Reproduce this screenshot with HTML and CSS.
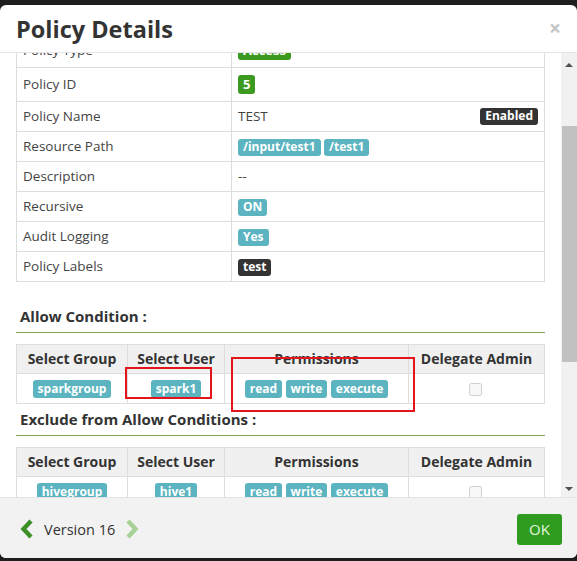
FILE: index.html
```html
<!DOCTYPE html>
<html lang="en">
<head>
  <meta charset="UTF-8">
  <title>Policy Details</title>
  <link rel="stylesheet" href="styles.css">
</head>
<body>
  <div class="modal">
    <div class="modal-header">
      <h3>Policy Details</h3>
      <button class="close">&times;</button>
    </div>

    <div class="modal-body">
      <div class="scroll-view" id="scroll-view">
        <div class="content">
          <h4 class="section-title">Policy Details :</h4>
          <table class="details-table">
            <tr class="tall" id="first-row">
              <td>Policy Type</td>
              <td><span class="label label-lg success">Access</span></td>
            </tr>
            <tr class="tall">
              <td>Policy ID</td>
              <td><span class="label label-lg success">5</span></td>
            </tr>
            <tr>
              <td>Policy Name</td>
              <td>TEST <span class="label dark pull-right">Enabled</span></td>
            </tr>
            <tr>
              <td>Resource Path</td>
              <td><span class="label info">/input/test1</span> <span class="label info">/test1</span></td>
            </tr>
            <tr>
              <td>Description</td>
              <td>--</td>
            </tr>
            <tr>
              <td>Recursive</td>
              <td><span class="label info">ON</span></td>
            </tr>
            <tr>
              <td>Audit Logging</td>
              <td><span class="label info">Yes</span></td>
            </tr>
            <tr>
              <td>Policy Labels</td>
              <td><span class="label dark">test</span></td>
            </tr>
          </table>

          <h4 class="section-title">Allow Condition :</h4>
          <table class="perm-table">
            <tr>
              <th class="c-group">Select Group</th>
              <th class="c-user">Select User</th>
              <th class="c-perm">Permissions</th>
              <th>Delegate Admin</th>
            </tr>
            <tr>
              <td><span class="label info">sparkgroup</span></td>
              <td><span class="label info">spark1</span></td>
              <td><span class="label info">read</span> <span class="label info">write</span> <span class="label info">execute</span></td>
              <td><input type="checkbox" disabled></td>
            </tr>
          </table>

          <h4 class="section-title">Exclude from Allow Conditions :</h4>
          <table class="perm-table">
            <tr>
              <th class="c-group">Select Group</th>
              <th class="c-user">Select User</th>
              <th class="c-perm">Permissions</th>
              <th>Delegate Admin</th>
            </tr>
            <tr>
              <td><span class="label info">hivegroup</span></td>
              <td><span class="label info">hive1</span></td>
              <td><span class="label info">read</span> <span class="label info">write</span> <span class="label info">execute</span></td>
              <td><input type="checkbox" disabled></td>
            </tr>
          </table>

          <h4 class="section-title">Deny Condition :</h4>
          <table class="perm-table">
            <tr>
              <th class="c-group">Select Group</th>
              <th class="c-user">Select User</th>
              <th class="c-perm">Permissions</th>
              <th>Delegate Admin</th>
            </tr>
            <tr>
              <td>--</td>
              <td>--</td>
              <td>--</td>
              <td>--</td>
            </tr>
          </table>
        </div>
      </div>

      <div class="scrollbar">
        <div class="sb-btn up"></div>
        <div class="sb-track"><div class="sb-thumb"></div></div>
        <div class="sb-btn down"></div>
      </div>
    </div>

    <div class="modal-footer">
      <div class="version">
        <svg class="chevron" width="14" height="20" viewBox="0 0 14 20">
          <path d="M11 2 L3.5 10 L11 18" fill="none" stroke="#3d8f27" stroke-width="4.4"/>
        </svg>
        <span>Version 16</span>
        <svg class="chevron" width="14" height="20" viewBox="0 0 14 20">
          <path d="M3 2 L10.5 10 L3 18" fill="none" stroke="#a6d197" stroke-width="4.4"/>
        </svg>
      </div>
      <button class="btn-ok">OK</button>
    </div>

    <!-- annotation boxes drawn over the screenshot -->
    <div class="mark mark-user"></div>
    <div class="mark mark-perm"></div>
  </div>

  <script>
    // body was scrolled a little past the first row
    const view = document.getElementById('scroll-view');
    const row = document.getElementById('first-row');
    view.scrollTop = row.getBoundingClientRect().bottom - view.getBoundingClientRect().top - 15;
  </script>
</body>
</html>
```

FILE: styles.css
```css
body {
  margin: 0;
  padding-top: 5px;
  height: 556px;
  overflow: hidden;
  background: #1e1e1e;
  font-family: "Open Sans", "Liberation Sans", sans-serif;
  color: #333;
}
.modal {
  position: relative;
  width: 577px;
  height: 553px;
  background: #fff;
  border-radius: 6px;
  display: flex;
  flex-direction: column;
  overflow: hidden;
}
.modal-header {
  height: 47px;
  flex: none;
  padding: 0 16px;
  display: flex;
  align-items: center;
  justify-content: space-between;
  border-bottom: 1px solid #e5e5e5;
}
.modal-header h3 {
  margin: 0;
  padding-top: 1px;
  font-size: 23.5px;
  font-weight: 700;
  color: #333;
}
.close {
  border: none;
  background: none;
  padding: 0;
  font-family: "Open Sans", sans-serif;
  font-size: 21px;
  font-weight: 700;
  line-height: 1;
  color: #c6c6c6;
}

.modal-body {
  flex: 1;
  min-height: 0;
  display: flex;
}
.scroll-view {
  flex: 1;
  overflow: hidden;
}
.content { padding: 15px 16px 40px; }

.scrollbar {
  width: 16px;
  flex: none;
  background: #f1f1f1;
  display: flex;
  flex-direction: column;
}
.sb-btn {
  height: 17px;
  display: flex;
  align-items: center;
  justify-content: center;
}
.sb-btn.up { padding-top: 3px; }
.sb-btn::before {
  content: "";
  border-left: 4px solid transparent;
  border-right: 4px solid transparent;
}
.sb-btn.up::before { border-bottom: 4px solid #505050; }
.sb-btn.down::before { border-top: 4px solid #505050; }
.sb-track { flex: 1; }
.sb-thumb {
  margin: 53px 0 0 1px;
  height: 236px;
  background: #c1c1c1;
}

/* labels */
.label {
  display: inline-block;
  padding: 1px 5px 2px;
  font-size: 12px;
  font-weight: 700;
  line-height: 14px;
  color: #fff;
  border-radius: 3px;
  vertical-align: baseline;
}
.label-lg {
  font-size: 13px;
  line-height: 17px;
  padding: 1px 5px;
}
.success { background: #3b9a1f; }
.info { background: #5bb4c0; }
.dark { background: #333; }
.pull-right { float: right; margin-top: 1px; }

/* detail table */
.details-table {
  width: 100%;
  border-collapse: collapse;
  margin-bottom: 21px;
}
.details-table td {
  border: 1px solid #ddd;
  padding: 5px 6px;
  font-size: 13.5px;
  line-height: 19px;
  color: #444;
}
.details-table td:first-child { width: 202px; }
.details-table .tall td { padding: 7px 6px; }

.section-title {
  margin: 2px 0 0;
  padding: 2px 4px 5px;
  font-size: 15px;
  font-weight: 700;
  line-height: 22px;
  color: #333;
  border-bottom: 1px solid #78a35c;
}

/* permission tables */
.perm-table {
  width: 100%;
  border-collapse: collapse;
  margin-top: 11px;
}
.perm-table th {
  background: #f0f0f0;
  border: 1px solid #ddd;
  padding: 4px 6px;
  font-size: 14px;
  font-weight: 700;
  line-height: 20px;
  color: #333;
}
.perm-table td {
  border: 1px solid #ddd;
  padding: 5px 4px;
  text-align: center;
  font-size: 13.5px;
  line-height: 19px;
}
.perm-table .label { padding: 2px 5px; }
.perm-table .c-group { width: 98px; }
.perm-table .c-user { width: 84px; }
.perm-table .c-perm { width: 171px; }
.perm-table input {
  margin: 0 2px 0 0;
  width: 13px;
  height: 13px;
  vertical-align: middle;
}

/* footer */
.modal-footer {
  height: 58px;
  flex: none;
  padding: 2px 15px 0 20px;
  display: flex;
  align-items: center;
  justify-content: space-between;
  background: #f2f2f2;
  border-top: 1px solid #e3e3e3;
}
.version {
  display: flex;
  align-items: center;
  gap: 10px;
  font-size: 14.5px;
  color: #333;
}
.btn-ok {
  width: 45px;
  height: 31px;
  border: none;
  border-radius: 3px;
  background: #2f9c20;
  color: #e4f4de;
  font-family: "Open Sans", sans-serif;
  font-size: 15px;
}

.mark {
  position: absolute;
  border: 2px solid #e3141c;
}
.mark-user { left: 125px; top: 362px; width: 83px; height: 28px; }
.mark-perm { left: 231px; top: 352px; width: 180px; height: 51px; }
```
